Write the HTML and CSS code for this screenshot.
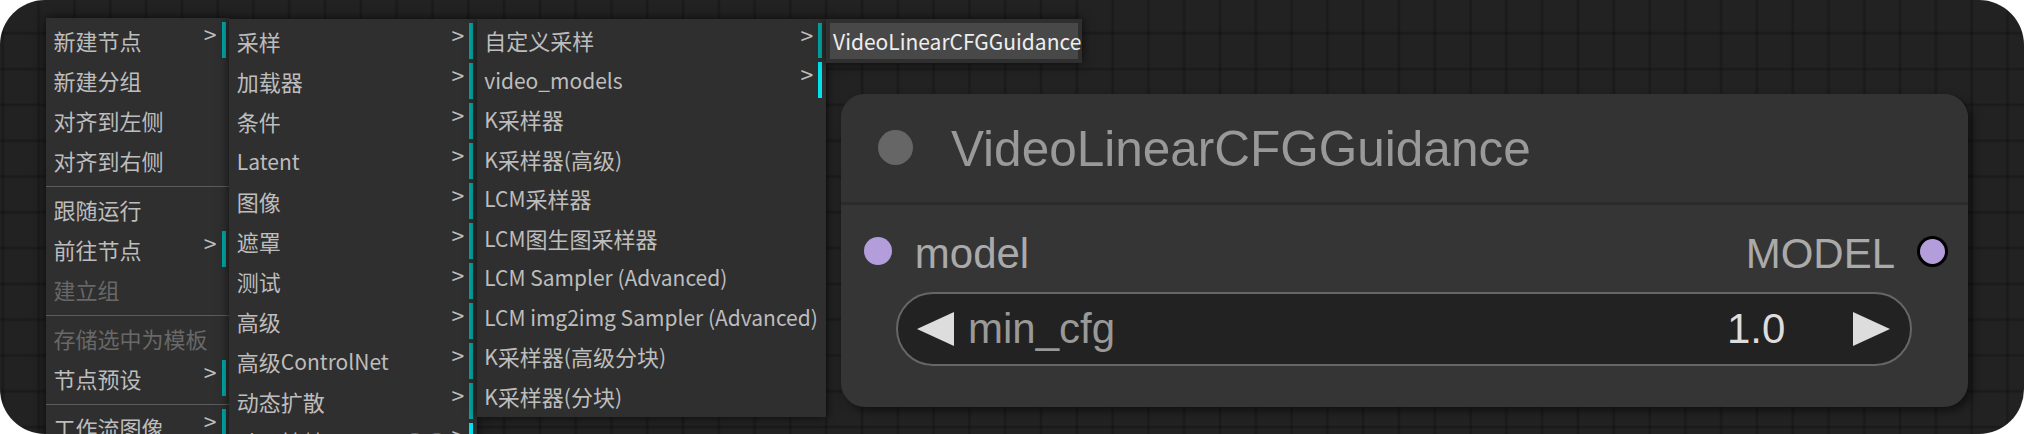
FILE: index.html
```html
<!DOCTYPE html>
<html lang="zh-CN">
<head>
<meta charset="utf-8">
<title>ComfyUI context menu</title>
<link rel="stylesheet" href="styles.css">
</head>
<body>
<div class="canvas">

  <div class="node">
    <div class="node-title">
      <span class="title-dot"></span>
      <span class="title-text">VideoLinearCFGGuidance</span>
    </div>
    <div class="node-body">
      <div class="slot-row">
        <div class="slot slot-in"><span class="dot dot-in"></span><span class="slot-label">model</span></div>
        <div class="slot slot-out"><span class="slot-label">MODEL</span><span class="dot dot-out"></span></div>
      </div>
      <div class="widget">
        <span class="arrow arrow-left"></span>
        <span class="w-label">min_cfg</span>
        <span class="w-value">1.0</span>
        <span class="arrow arrow-right"></span>
      </div>
    </div>
  </div>

  <div class="menu menu-main">
    <div class="item sub">新建节点</div>
    <div class="item">新建分组</div>
    <div class="item">对齐到左侧</div>
    <div class="item">对齐到右侧</div>
    <div class="sep"></div>
    <div class="item">跟随运行</div>
    <div class="item sub">前往节点</div>
    <div class="item disabled">建立组</div>
    <div class="sep"></div>
    <div class="item disabled">存储选中为模板</div>
    <div class="item sub">节点预设</div>
    <div class="sep"></div>
    <div class="item sub">工作流图像</div>
  </div>

  <div class="menu menu-cat">
    <div class="item sub">采样</div>
    <div class="item sub">加载器</div>
    <div class="item sub">条件</div>
    <div class="item sub"><span class="lat">Latent</span></div>
    <div class="item sub">图像</div>
    <div class="item sub">遮罩</div>
    <div class="item sub">测试</div>
    <div class="item sub">高级</div>
    <div class="item sub">高级<span class="lat">ControlNet</span></div>
    <div class="item sub">动态扩散</div>
    <div class="item sub bright">动画抽帧<span class="emoji-blue"></span><span class="emoji-dots">○○</span></div>
  </div>

  <div class="menu menu-sub">
    <div class="item sub">自定义采样</div>
    <div class="item sub bright"><span class="lat">video_models</span></div>
    <div class="item"><span class="lat">K</span>采样器</div>
    <div class="item"><span class="lat">K</span>采样器<span class="lat">(</span>高级<span class="lat">)</span></div>
    <div class="item"><span class="lat">LCM</span>采样器</div>
    <div class="item"><span class="lat">LCM</span>图生图采样器</div>
    <div class="item"><span class="lat">LCM Sampler (Advanced)</span></div>
    <div class="item"><span class="lat">LCM img2img Sampler (Advanced)</span></div>
    <div class="item"><span class="lat">K</span>采样器<span class="lat">(</span>高级分块<span class="lat">)</span></div>
    <div class="item"><span class="lat">K</span>采样器<span class="lat">(</span>分块<span class="lat">)</span></div>
  </div>

  <div class="menu menu-leaf">
    <div class="item hover"><span class="lat">VideoLinearCFGGuidance</span></div>
  </div>

</div>
</body>
</html>
```

FILE: styles.css
```css
html, body {
  margin: 0;
  padding: 0;
  background: #ffffff;
}

.canvas {
  position: relative;
  width: 2024px;
  height: 434px;
  overflow: hidden;
  border-radius: 45px;
  background-color: #222222;
  background-image:
    linear-gradient(90deg, transparent 0, rgba(0,0,0,0.14) 1px, rgba(0,0,0,0.26) 2px, rgba(0,0,0,0.14) 3px, transparent 4px),
    linear-gradient(180deg, transparent 0, rgba(0,0,0,0.14) 1px, rgba(0,0,0,0.26) 2px, rgba(0,0,0,0.14) 3px, transparent 4px);
  background-size: 35.8px 35.8px;
  background-position: 0.9px 31.3px;
}

/* ---------- context menus ---------- */
.menu {
  position: absolute;
  box-sizing: border-box;
  display: flex;
  flex-direction: column;
  gap: 4px;
  padding: 3.7px 3.5px 3.7px 2px;
  background: #2f2f2f;
  box-shadow: 0 0 10px rgba(0, 0, 0, 0.7);
  font-family: "Noto Sans CJK SC", "Noto Sans", sans-serif;
  font-size: 22px;
  color: #bdbdbd;
}

.menu-main { left: 46px; top: 18px; width: 183px; }
.menu-cat  { left: 229.3px; top: 19px; width: 247.4px; }
.menu-sub  { left: 476.7px; top: 19px; width: 349px; }
.menu-leaf { left: 826px; top: 19px; width: 256px; padding: 3.7px 3.7px; }

.item {
  position: relative;
  box-sizing: border-box;
  height: 36px;
  display: flex;
  align-items: center;
  padding-left: 5.5px;
  white-space: pre;
}

.lat {
  font-size: 21px;
}

.menu-sub .item { height: 35.5px; }

.item.sub { border-right: 4px solid #00a8a8; }
.item.sub.bright { border-right-color: #00e2ee; }

.item.sub::after {
  content: ">";
  position: absolute;
  right: 5px;
  top: -6px;
  line-height: 36px;
  font-size: 23px;
  color: #bdbdbd;
}

.item.disabled { color: #686868; }

.item.hover {
  background: #484848;
  color: #eeeeee;
  padding-left: 3.4px;
  height: 36.6px;
}

.sep {
  flex: none;
  height: 5px;
  box-sizing: border-box;
  border-bottom: 1px solid #5c5c5c;
  margin: 0 -3.5px 0 -2px;
}

.emoji-blue {
  display: inline-block;
  width: 13px;
  height: 14px;
  margin-left: 50px;
  background: #2f8bd8;
  border-radius: 2px;
}

.emoji-dots {
  margin-left: 16px;
  color: #777;
}

/* ---------- node ---------- */
.node {
  position: absolute;
  left: 841px;
  top: 94px;
  width: 1127px;
  height: 313px;
  border-radius: 24px;
  background: #353535;
  box-shadow: 4px 4px 9px rgba(0, 0, 0, 0.5);
  overflow: hidden;
  display: flex;
  flex-direction: column;
  font-family: "Liberation Sans", Arial, sans-serif;
}

.node-title {
  flex: none;
  height: 108px;
  background: #333333;
  border-bottom: 3px solid #2b2b2b;
  display: flex;
  align-items: center;
  padding-left: 36.5px;
}

.title-dot {
  flex: none;
  width: 35px;
  height: 35px;
  border-radius: 50%;
  background: #666666;
  margin-right: 38.5px;
  margin-bottom: 1px;
}

.title-text {
  font-size: 49.5px;
  line-height: 57px;
  color: #999999;
  white-space: nowrap;
}

.node-body {
  flex: 1;
  display: flex;
  flex-direction: column;
  padding-top: 24.7px;
}

.slot-row {
  height: 48px;
  display: flex;
  justify-content: space-between;
  align-items: center;
  padding: 0 20.2px 0 23px;
}

.slot {
  display: flex;
  align-items: center;
}

.slot-label {
  font-size: 42px;
  line-height: 48px;
  color: #aaaaaa;
}

.dot {
  flex: none;
  border-radius: 50%;
  background: #b39ddb;
}

.dot-in {
  width: 28px;
  height: 28px;
  margin-right: 22.8px;
  margin-bottom: 6px;
}

.dot-out {
  width: 25px;
  height: 25px;
  border: 3px solid #000000;
  margin-left: 21.8px;
  margin-bottom: 4px;
}

.widget {
  margin: 14.6px 56px 0 55px;
  height: 74px;
  box-sizing: border-box;
  border: 2px solid #666666;
  border-radius: 37px;
  background: #222222;
  display: flex;
  align-items: center;
  padding: 0 20px 0 19px;
}

.arrow {
  flex: none;
  width: 0;
  height: 0;
  border-top: 17px solid transparent;
  border-bottom: 17px solid transparent;
}

.arrow-left { border-right: 37px solid #dddddd; }
.arrow-right { border-left: 37px solid #dddddd; }

.w-label {
  margin-left: 14px;
  font-size: 42px;
  line-height: 48px;
  color: #999999;
  flex: 1;
}

.w-value {
  font-size: 42px;
  line-height: 48px;
  color: #dddddd;
  margin-right: 67.6px;
}
```
